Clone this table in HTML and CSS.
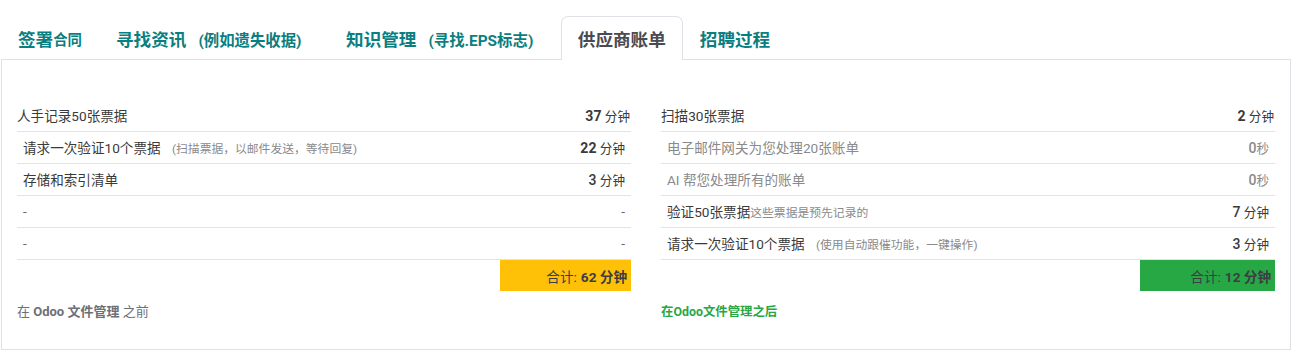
FILE: index.html
```html
<!DOCTYPE html>
<html lang="zh">
<head>
<meta charset="utf-8">
<title>供应商账单</title>
<link rel="stylesheet" href="styles.css">
</head>
<body>
<div class="page">
  <ul class="tabs">
    <li class="tab"><span class="big">签署</span><span class="mid">合同</span></li>
    <li class="tab"><span class="big">寻找资讯</span><span class="note">(例如遗失收据)</span></li>
    <li class="tab"><span class="big">知识管理</span><span class="note">(寻找.EPS标志)</span></li>
    <li class="tab active"><span class="big">供应商账单</span></li>
    <li class="tab"><span class="big">招聘过程</span></li>
  </ul>
  <div class="panel">
    <div class="col">
      <div class="rows">
        <div class="row first"><span class="label">人手记录50张票据</span><span class="val"><b>37</b> <span class="unit">分钟</span></span></div>
        <div class="row"><span class="label">请求一次验证10个票据 <small class="hint">(扫描票据，以邮件发送，等待回复)</small></span><span class="val"><b>22</b> <span class="unit">分钟</span></span></div>
        <div class="row"><span class="label">存储和索引清单</span><span class="val"><b class="light">3</b> <span class="unit">分钟</span></span></div>
        <div class="row"><span class="label dash">-</span><span class="val dash">-</span></div>
        <div class="row"><span class="label dash">-</span><span class="val dash">-</span></div>
      </div>
      <div class="total-line"><div class="total yellow">合计: <b>62 分钟</b></div></div>
      <div class="foot before">在 <b>Odoo 文件管理</b> 之前</div>
    </div>
    <div class="col">
      <div class="rows">
        <div class="row first"><span class="label">扫描30张票据</span><span class="val"><b>2</b> <span class="unit">分钟</span></span></div>
        <div class="row muted"><span class="label">电子邮件网关为您处理20张账单</span><span class="val"><b>0</b><span class="unit">秒</span></span></div>
        <div class="row muted"><span class="label">AI 帮您处理所有的账单</span><span class="val"><b>0</b><span class="unit">秒</span></span></div>
        <div class="row"><span class="label">验证50张票据<small class="hint tight">这些票据是预先记录的</small></span><span class="val"><b class="light">7</b> <span class="unit">分钟</span></span></div>
        <div class="row"><span class="label">请求一次验证10个票据 <small class="hint">(使用自动跟催功能，一键操作)</small></span><span class="val"><b class="light">3</b> <span class="unit">分钟</span></span></div>
      </div>
      <div class="total-line"><div class="total green">合计: <b>12 分钟</b></div></div>
      <div class="foot after">在Odoo文件管理之后</div>
    </div>
  </div>
</div>
</body>
</html>
```

FILE: styles.css
```css
* { box-sizing: border-box; }
html, body { margin: 0; padding: 0; background: #fff; }
body {
  font-family: Roboto, "Noto Sans CJK SC", "Noto Sans", sans-serif;
  color: #3a3a3a;
}
.page {
  width: 1290px;
  margin: 16px 0 0 1px;
}
.tabs {
  list-style: none;
  margin: 0 0 -1px 0;
  padding: 0;
  display: flex;
  align-items: stretch;
  position: relative;
  z-index: 1;
}
.tab {
  display: flex;
  align-items: center;
  height: 44px;
  padding: 0 16px;
  border: 1px solid transparent;
  border-bottom: none;
  border-radius: 7px 7px 0 0;
  color: #0a7e80;
  font-weight: 700;
  white-space: nowrap;
}
.tab .big { font-size: 17.6px; }
.tab .mid { font-size: 14.4px; }
.tab .note { font-size: 15.4px; margin-left: 12px; margin-right: 10.5px; }
.tab.active {
  background: #fff;
  border-color: #dee2e6;
  color: #4a4a50;
}
.panel {
  border: 1px solid #dee2e6;
  height: 291px;
  padding: 40px 15px 0 15px;
  display: grid;
  grid-template-columns: 1fr 1fr;
  column-gap: 30px;
}
.rows { display: flex; flex-direction: column; }
.row {
  display: flex;
  justify-content: space-between;
  align-items: center;
  height: 32px;
  padding: 0 6px 1px 6px;
  border-bottom: 1px solid #e3e3e3;
  font-size: 13.6px;
  color: #3a3a3a;
}
.row.first { padding: 0 1px 1px 0; }
.row b { font-weight: 700; color: #3a3a3a; font-size: 14px; }
.row b.light { font-weight: 500; }
.dash { color: #666; }
.unit { font-size: 12.6px; }
.hint { font-size: 11.8px; color: #8a8a8a; margin-left: 8px; }
.hint.tight { margin-left: 0; }
.row.muted, .row.muted b { color: #8a8a8a; }
.row.muted b { font-weight: 500; }
.total-line { display: flex; justify-content: flex-end; }
.total {
  height: 31px;
  display: flex;
  align-items: center;
  justify-content: flex-end;
  padding-right: 4px;
  font-size: 13.6px;
  color: #3d3d46;
}
.total b { margin-left: 4px; font-weight: 700; }
.total.yellow { background: #ffc107; width: 131px; }
.total.green { background: #28a745; width: 135px; }
.foot {
  margin-top: 12px;
  line-height: 18px;
}
.foot.before { color: #6c6f75; font-size: 13px; }
.foot.before b { font-weight: 700; }
.foot.after { color: #28a745; font-weight: 700; font-size: 12.4px; }
```
